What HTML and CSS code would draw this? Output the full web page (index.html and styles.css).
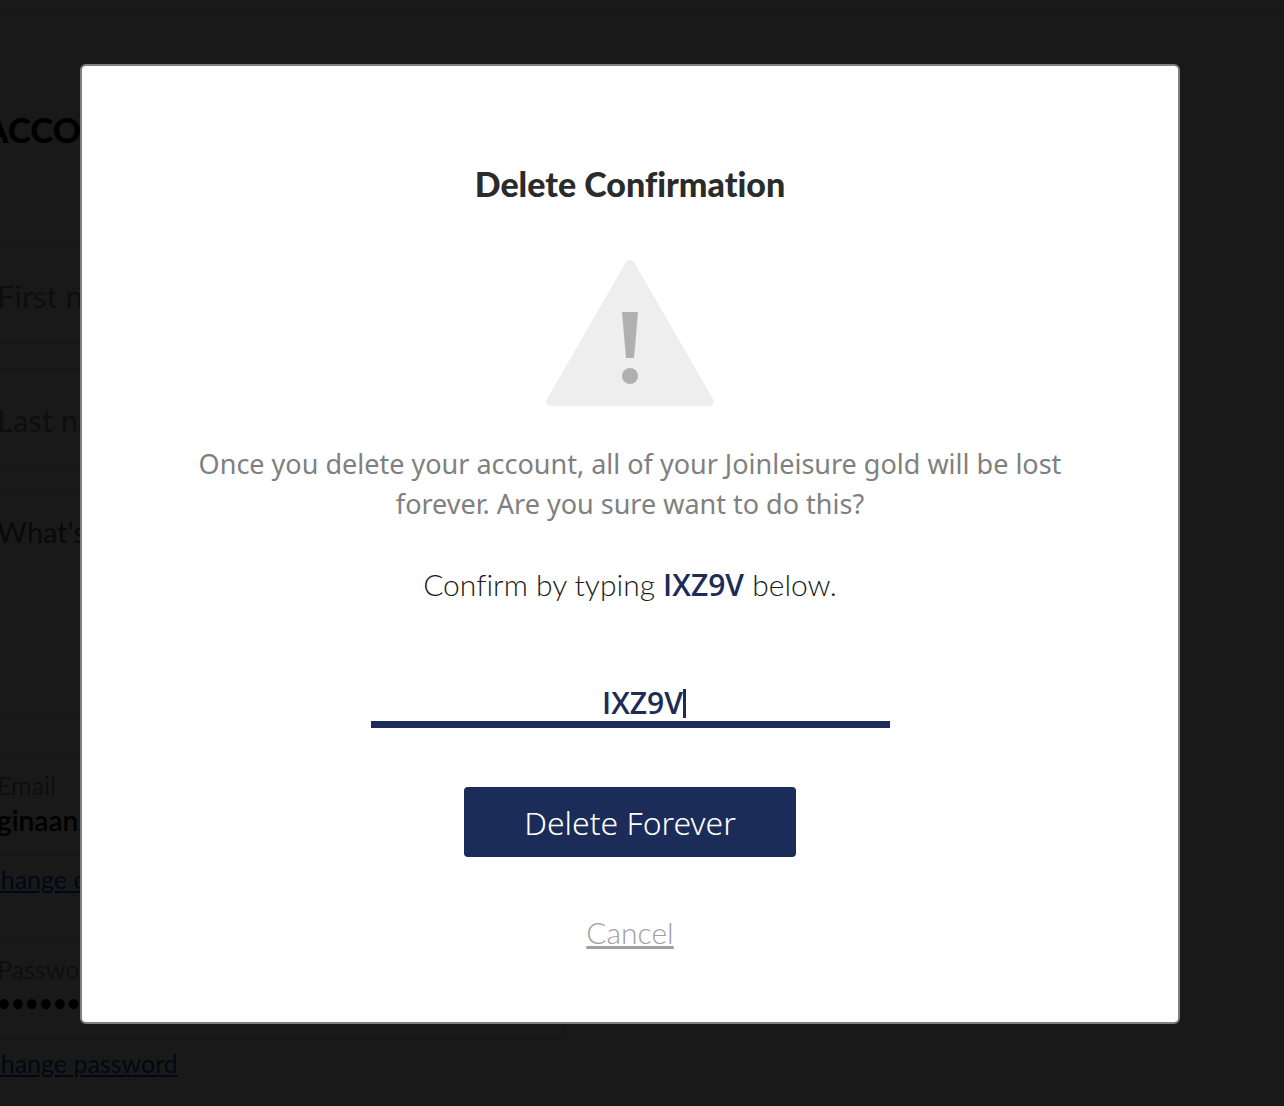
FILE: index.html
```html
<!DOCTYPE html>
<html lang="en">
<head>
<meta charset="utf-8">
<meta name="viewport" content="width=device-width, initial-scale=1">
<title>Delete Confirmation</title>
<link rel="stylesheet" href="styles.css">
</head>
<body>
<header class="topbar"></header>
<main class="account">
  <h1 class="account-title">ACCOUNT</h1>
  <form class="account-form">
    <input class="box name-box" type="text" placeholder="First name" aria-label="First name">
    <input class="box name-box" type="text" placeholder="Last name" aria-label="Last name">
    <textarea class="box about-box" placeholder="What's" aria-label="About you"></textarea>
    <div class="group">
      <div class="box detail-box">
        <label class="detail-label" for="email">Email</label>
        <input class="detail-value" id="email" type="text" value="ginaan">
      </div>
      <a class="change" href="#email">Change email</a>
    </div>
    <div class="group">
      <div class="box detail-box">
        <label class="detail-label" for="password">Password</label>
        <input class="detail-value" id="password" type="password" value="password">
      </div>
      <a class="change" href="#password">Change password</a>
    </div>
  </form>
</main>

<div class="overlay">
  <section class="modal" role="dialog" aria-modal="true" aria-labelledby="modal-title">
    <h2 class="modal-title" id="modal-title">Delete Confirmation</h2>
    <svg class="warning" viewBox="0 0 168 146" aria-hidden="true">
      <path d="M80 2Q81 0 84 0Q87 0 88 2L167 139Q169 142 167 144Q166 146 163 146H5Q2 146 1 144Q-1 142 1 139Z" fill="#eeeeee"/>
      <path d="M76 52H92L88 98H80Z" fill="#b0b0b0"/>
      <circle cx="84" cy="116" r="8" fill="#b0b0b0"/>
    </svg>
    <p class="message">Once you delete your account, all of your Joinleisure gold will be lost forever. Are you sure want to do this?</p>
    <label class="prompt" for="code">Confirm by typing <strong class="code">IXZ9V</strong> below.</label>
    <div class="code-field">
      <input class="code-input" id="code" type="text" value="IXZ9V">
      <span class="caret"></span>
    </div>
    <button class="delete" type="button">Delete Forever</button>
    <a class="cancel" href="#">Cancel</a>
  </section>
</div>
</body>
</html>
```
FILE: styles.css
```css
* {
  box-sizing: border-box;
}

body {
  margin: 0;
  min-height: 100vh;
  overflow: hidden;
  background: #ffffff;
  font-family: Lato, "Open Sans", sans-serif;
  font-variant-ligatures: none;
}

.topbar {
  height: 14px;
  border-bottom: 2px solid #e6e6e6;
}

.account {
  max-width: 580px;
  margin-left: -16px;
  padding-top: 91px;
}

.account-title {
  margin: 0 0 91px;
  font-size: 35px;
  line-height: 48px;
  font-weight: 900;
  color: #000000;
}

.account-form {
  display: flex;
  flex-direction: column;
  gap: 24px;
}

.box {
  display: block;
  width: 100%;
  padding: 0 11px;
  border: 2px solid #dcdcdc;
  border-radius: 6px;
  background: transparent;
  font-family: inherit;
  color: #000000;
}

.name-box {
  height: 100px;
  padding-top: 4px;
  font-size: 31px;
}

.name-box::placeholder {
  color: #909090;
}

.about-box {
  height: 224px;
  padding-top: 20px;
  font-size: 29px;
  line-height: 36px;
  resize: none;
}

.about-box::placeholder {
  color: #606060;
}

.group {
  height: 160px;
}

.about-box + .group {
  margin-top: 16px;
}

.detail-box {
  height: 100px;
  padding-top: 10px;
}

.detail-label {
  display: block;
  font-size: 25px;
  line-height: 34px;
  color: #909090;
}

.detail-value {
  display: block;
  width: 100%;
  height: 36px;
  padding: 0;
  border: 0;
  background: transparent;
  font-family: inherit;
  font-size: 28px;
  font-weight: 600;
  color: #000000;
}

.detail-value[type="password"] {
  height: 32px;
  font-size: 24px;
}

.change {
  display: block;
  margin-top: 6px;
  font-size: 25px;
  line-height: 34px;
  color: #0050c8;
}

.overlay {
  position: fixed;
  inset: 0;
  display: flex;
  justify-content: center;
  align-items: flex-start;
  padding: 64px 104px 64px 80px;
  background: rgba(0, 0, 0, 0.9);
}

.modal {
  display: flex;
  flex-direction: column;
  align-items: center;
  width: 100%;
  max-width: 1100px;
  padding: 94px 100px 70px;
  border: 2px solid #808080;
  border-radius: 6px;
  background: #ffffff;
  text-align: center;
}

.modal-title {
  margin: 0;
  font-size: 34px;
  line-height: 48px;
  font-weight: 900;
  color: #2a2b2b;
}

.warning {
  width: 168px;
  height: 146px;
  margin-top: 52px;
}

.message {
  margin: 38px 0 0;
  font-family: "Noto Sans", sans-serif;
  font-size: 27px;
  line-height: 40px;
  color: #808080;
}

.prompt {
  margin-top: 40px;
  font-size: 30px;
  font-weight: 300;
  line-height: 40px;
  color: #1a1b1b;
}

.code {
  font-family: "Open Sans", sans-serif;
  font-weight: 600;
  color: #1b2c58;
}

.code-field {
  display: flex;
  justify-content: center;
  align-items: center;
  width: 100%;
  max-width: 519px;
  margin-top: 80px;
  padding-left: 28px;
  border-bottom: 7px solid #1b2c58;
}

.code-input {
  field-sizing: content;
  height: 36px;
  padding: 0 0 2px;
  border: 0;
  outline: 0;
  background: transparent;
  font-family: "Open Sans", sans-serif;
  font-size: 30px;
  font-weight: 600;
  color: #1b2c58;
}

.caret {
  width: 3px;
  height: 29px;
  background: #1b2c58;
}

.delete {
  width: 332px;
  height: 70px;
  margin-top: 59px;
  padding: 0;
  border: 0;
  border-radius: 4px;
  background: #1b2c58;
  font-family: "Noto Sans", sans-serif;
  font-size: 32px;
  font-weight: 300;
  color: #ffffff;
}

.cancel {
  margin-top: 55px;
  font-size: 30px;
  font-weight: 300;
  line-height: 40px;
  color: #a0a0a0;
}
```
